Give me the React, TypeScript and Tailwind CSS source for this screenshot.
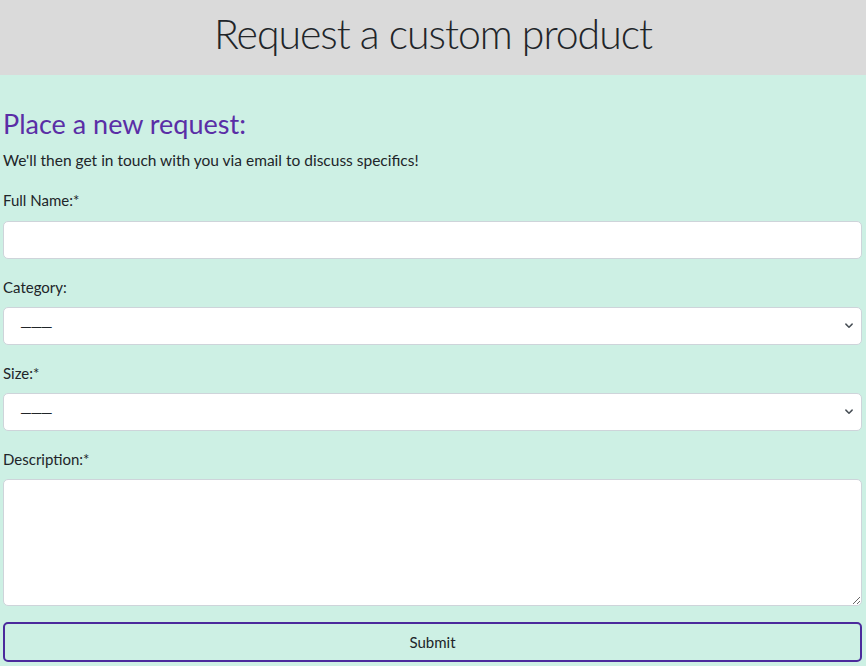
import { ChangeEvent, useState } from 'react';

const font = { fontFamily: '"Lato", "Open Sans", sans-serif' };

function Chevron() {
  return (
    <svg
      className="pointer-events-none absolute right-[8px] top-1/2 -translate-y-1/2"
      width="10"
      height="10"
      viewBox="0 0 16 16"
      fill="none"
      stroke="#495057"
      strokeWidth="2.4"
      strokeLinecap="round"
      strokeLinejoin="round"
    >
      <path d="m3 5 5 5 5-5" />
    </svg>
  );
}

export default function App() {
  const [form, setForm] = useState({ name: '', category: '', size: '', description: '' });

  const update = (key: string) => (e: ChangeEvent<HTMLInputElement | HTMLSelectElement | HTMLTextAreaElement>) =>
    setForm({ ...form, [key]: e.target.value });

  return (
    <div className="min-h-screen bg-[#cdf0e4] text-[#212529]" style={font}>
      {/* Header */}
      <div className="h-[75px] bg-[#dadada] flex items-center justify-center">
        <h1 className="-mt-[8px] text-[41px] font-light text-[#212529] tracking-tight">Request a custom product</h1>
      </div>

      {/* Form */}
      <div className="pl-[3px] pr-[4px] pt-[32px]">
        <h2 className="text-[27px] leading-[34px] text-[#5a2ea6]">Place a new request:</h2>
        <p className="mt-[9px] text-[15.5px] leading-[20px]">We'll then get in touch with you via email to discuss specifics!</p>

        <form className="mt-[20px]" onSubmit={(e) => e.preventDefault()}>
          <label className="block text-[15px] leading-[20px]">Full Name:*</label>
          <input
            value={form.name}
            onChange={update('name')}
            className="mt-[11px] block w-full h-[38px] rounded-[5px] border border-[#ced4da] bg-white px-3 outline-none"
          />

          <label className="block mt-[18px] text-[15px] leading-[20px]">Category:</label>
          <div className="relative mt-[10px]">
            <select
              value={form.category}
              onChange={update('category')}
              className="block w-full h-[38px] appearance-none rounded-[5px] border border-[#ced4da] bg-white pl-[16px] text-[15px] tracking-[-1.5px] outline-none"
            >
              <option value="">———</option>
            </select>
            <Chevron />
          </div>

          <label className="block mt-[18px] text-[15px] leading-[20px]">Size:*</label>
          <div className="relative mt-[10px]">
            <select
              value={form.size}
              onChange={update('size')}
              className="block w-full h-[38px] appearance-none rounded-[5px] border border-[#ced4da] bg-white pl-[16px] text-[15px] tracking-[-1.5px] outline-none"
            >
              <option value="">———</option>
            </select>
            <Chevron />
          </div>

          <label className="block mt-[18px] text-[15px] leading-[20px]">Description:*</label>
          <textarea
            value={form.description}
            onChange={update('description')}
            className="mt-[10px] block w-full h-[127px] rounded-[5px] border border-[#ced4da] bg-white px-3 py-2 outline-none"
          />

          <button
            type="submit"
            className="mt-[16px] block w-full h-[40px] rounded-[5px] border-2 border-[#4b2a9c] text-[15px] text-[#212529]"
          >
            Submit
          </button>
        </form>
      </div>
    </div>
  );
}
